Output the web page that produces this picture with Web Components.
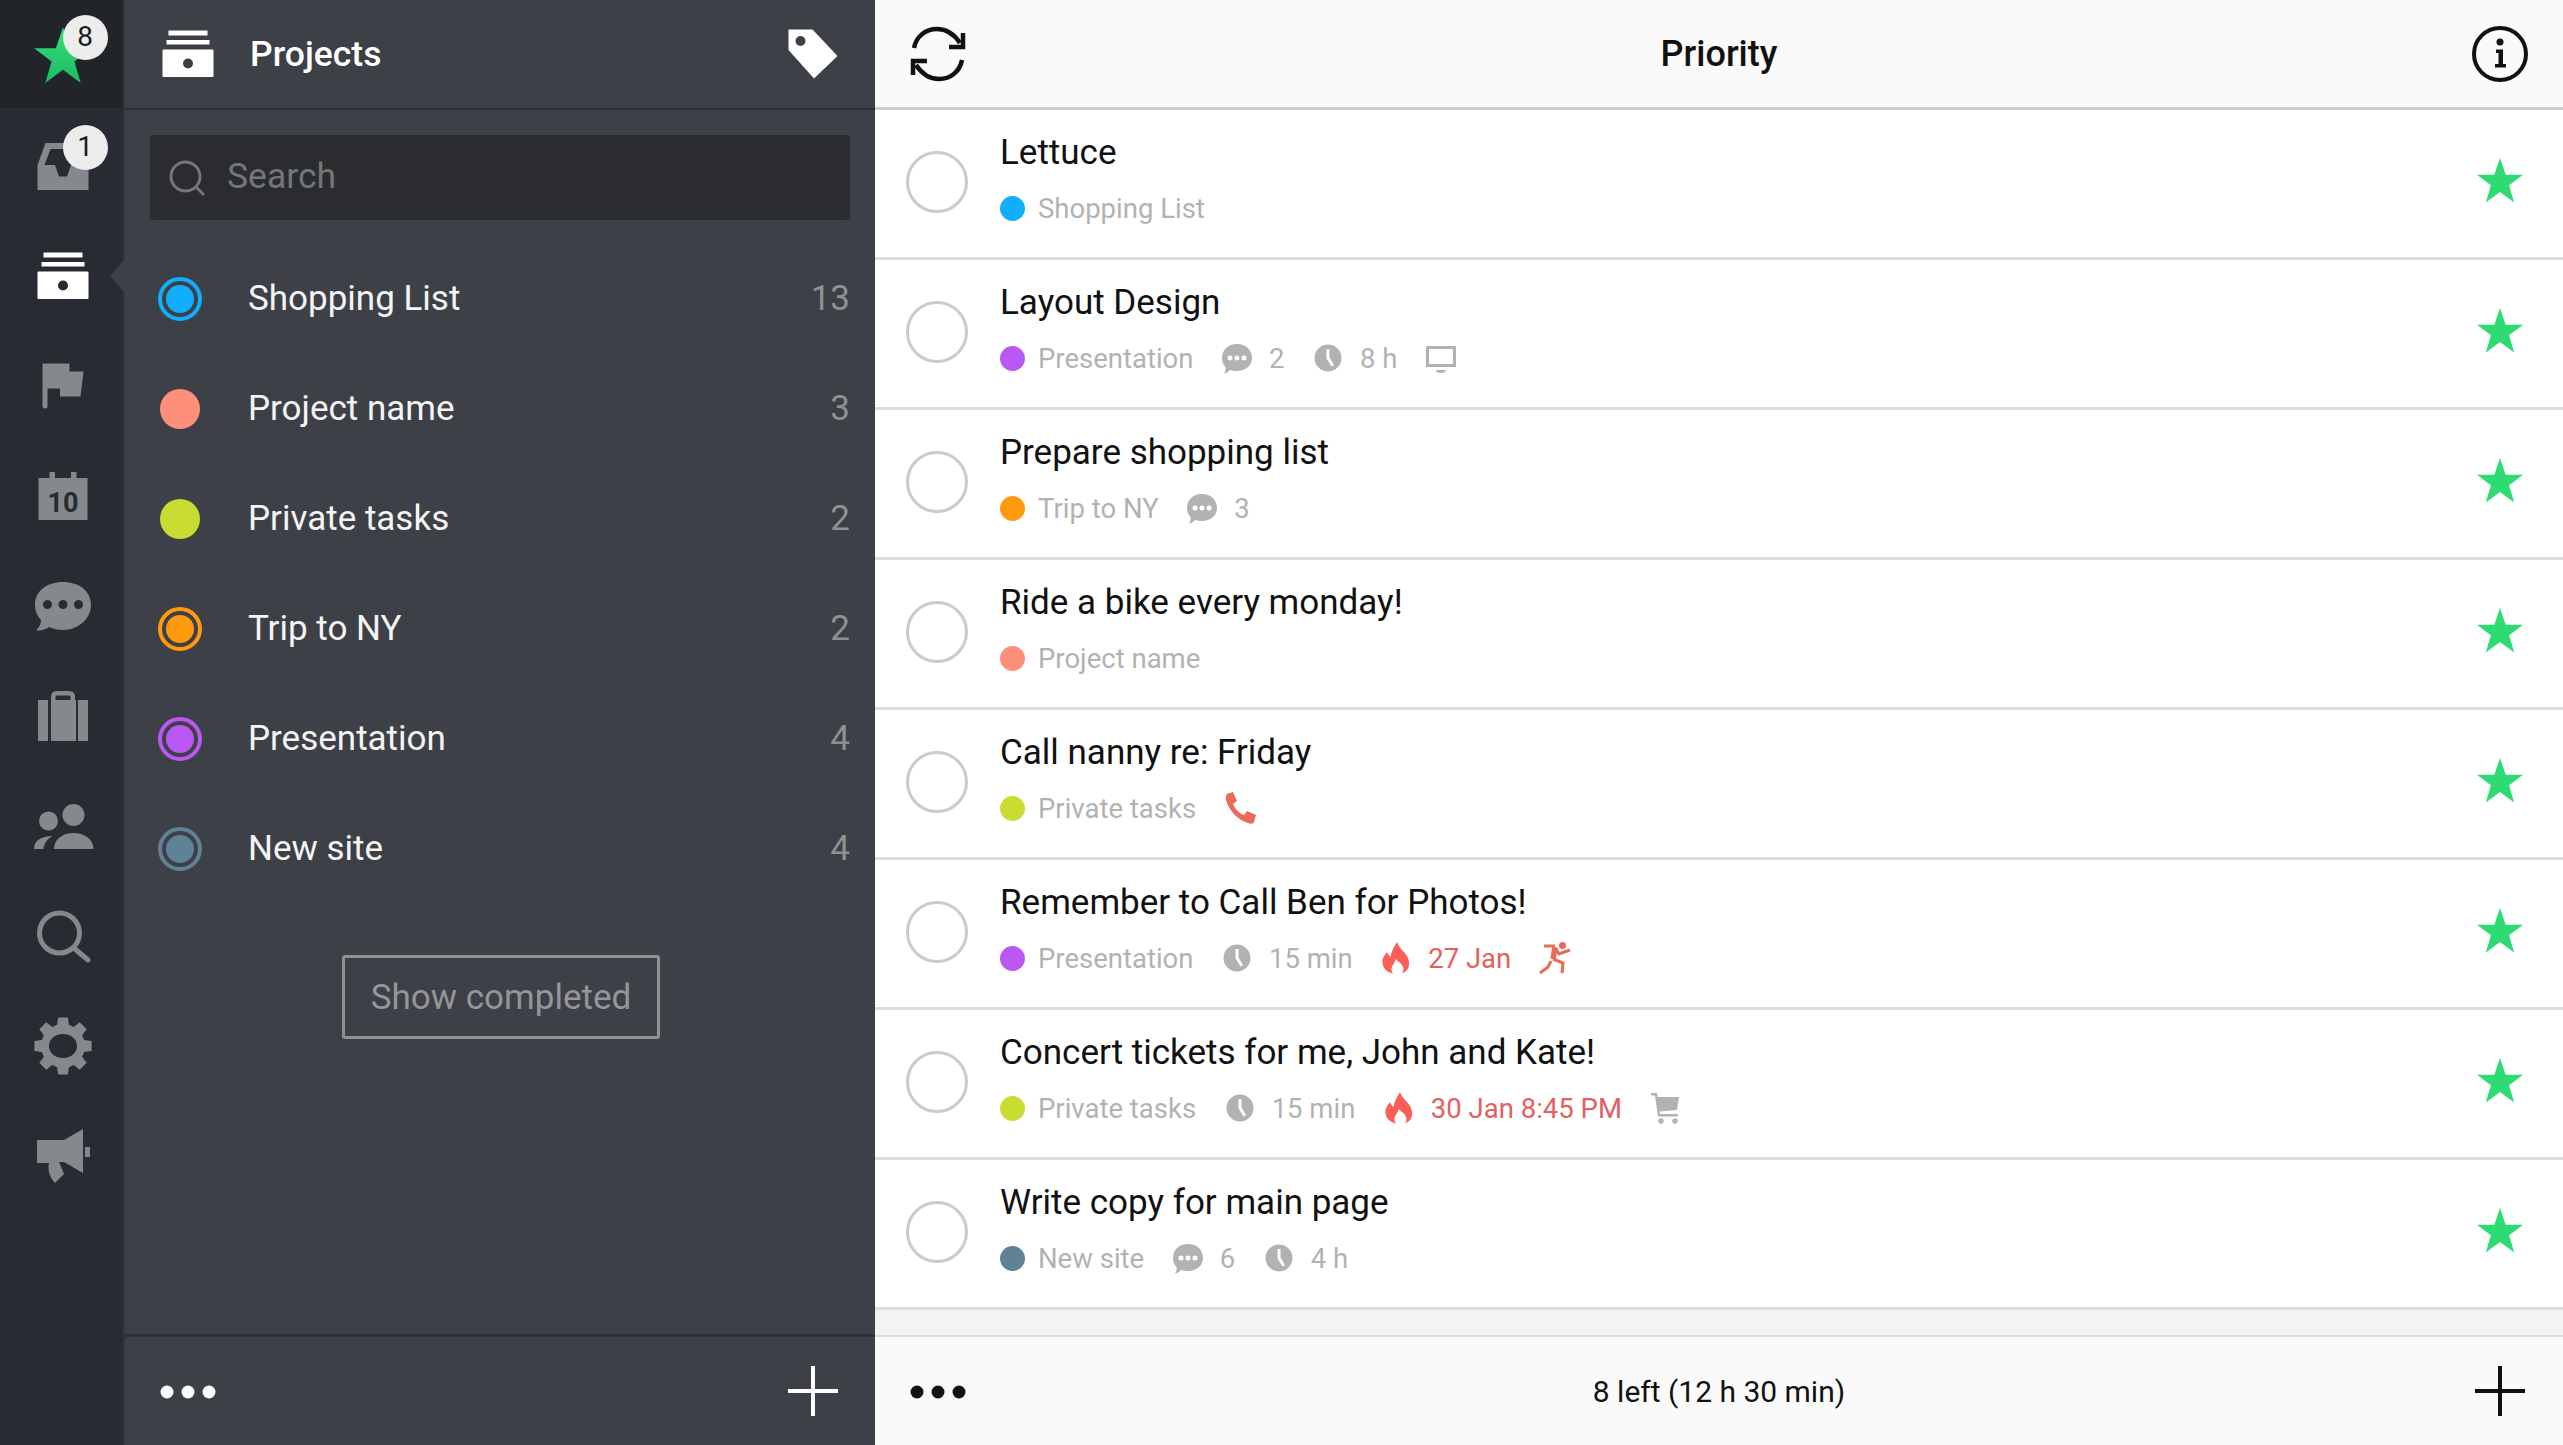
<!DOCTYPE html>
<html>
<head>
<meta charset="utf-8">
<title>Priority</title>
<style>
    html, body { margin: 0; height: 100%; overflow: hidden; font-family: Roboto, "Liberation Sans", sans-serif; }
    app-shell { height: 1445px; }
</style>
</head>
<body>
<app-shell>
    <app-rail slot="rail">
        <rail-item icon="star" badge="8" top></rail-item>
        <rail-item icon="inbox" badge="1"></rail-item>
        <rail-item icon="archive" active></rail-item>
        <rail-item icon="flag"></rail-item>
        <rail-item icon="calendar"></rail-item>
        <rail-item icon="bubble"></rail-item>
        <rail-item icon="briefcase"></rail-item>
        <rail-item icon="people"></rail-item>
        <rail-item icon="search"></rail-item>
        <rail-item icon="gear"></rail-item>
        <rail-item icon="megaphone"></rail-item>
    </app-rail>

    <project-panel slot="projects">
        <project-row color="#10aefb" count="13" ring>Shopping List</project-row>
        <project-row color="#ff8f7a" count="3">Project name</project-row>
        <project-row color="#c8dc32" count="2">Private tasks</project-row>
        <project-row color="#ff9a0e" count="2" ring>Trip to NY</project-row>
        <project-row color="#bb57f2" count="4" ring>Presentation</project-row>
        <project-row color="#5f8296" count="4" ring>New site</project-row>
    </project-panel>

    <task-panel slot="tasks">
        <task-row name="Lettuce" project="Shopping List" color="#10aefb"></task-row>
        <task-row name="Layout Design" project="Presentation" color="#bb57f2">
            <meta-tag icon="chat">2</meta-tag>
            <meta-tag icon="clock">8 h</meta-tag>
            <meta-tag icon="monitor"></meta-tag>
        </task-row>
        <task-row name="Prepare shopping list" project="Trip to NY" color="#ff9a0e">
            <meta-tag icon="chat">3</meta-tag>
        </task-row>
        <task-row name="Ride a bike every monday!" project="Project name" color="#ff8f7a"></task-row>
        <task-row name="Call nanny re: Friday" project="Private tasks" color="#c8dc32">
            <meta-tag icon="phone" tone="red"></meta-tag>
        </task-row>
        <task-row name="Remember to Call Ben for Photos!" project="Presentation" color="#bb57f2">
            <meta-tag icon="clock">15 min</meta-tag>
            <meta-tag icon="flame" tone="red">27 Jan</meta-tag>
            <meta-tag icon="runner" tone="red"></meta-tag>
        </task-row>
        <task-row name="Concert tickets for me, John and Kate!" project="Private tasks" color="#c8dc32">
            <meta-tag icon="clock">15 min</meta-tag>
            <meta-tag icon="flame" tone="red">30 Jan 8:45 PM</meta-tag>
            <meta-tag icon="cart"></meta-tag>
        </task-row>
        <task-row name="Write copy for main page" project="New site" color="#5f8296">
            <meta-tag icon="chat">6</meta-tag>
            <meta-tag icon="clock">4 h</meta-tag>
        </task-row>
    </task-panel>
</app-shell>

<script>
    // gear outline, 8 teeth around the centre of a 60 box
    function gearPath() {
        const pts = [];
        for (let i = 0; i < 8; i++) {
            const a = i * Math.PI / 4 - Math.PI / 2;
            [[-0.27, 22], [-0.17, 29], [0.17, 29], [0.27, 22]].forEach(([da, r]) => {
                pts.push((30 + r * Math.cos(a + da)).toFixed(1) + ' ' + (30 + r * Math.sin(a + da)).toFixed(1));
            });
        }
        return 'M' + pts.join('L') + 'Z';
    }

    const STAR = 'M50 2 61.8 37H98L69 59 79.5 95 50 73 20.5 95 31 59 2 37H38.2Z';

    // all icons live here, <use> can't reach across shadow roots
    const ICONS = {
        star: { box: 100, body: `<defs><linearGradient id="g" x1="0" y1="0" x2="0" y2="1"><stop offset="0" stop-color="#33e07c"/><stop offset="1" stop-color="#1dbb60"/></linearGradient></defs><path fill="url(#g)" d="${STAR}"/>` },
        flatstar: { box: 100, body: `<path fill="#2edb72" d="${STAR}"/>` },
        archive: { box: 60, body: `<path d="M10.5 6.500H49.500V11.500H10.500ZM8.500 16H51.500V20.500H8.500Z"/><path fill-rule="evenodd" d="M5.500 25.500H54.500Q55.500 25.500 55.500 26.500V52Q55.500 53 54.500 53H5.500Q4.500 53 4.500 52V26.500Q4.500 25.500 5.500 25.500ZM30 34.500A5 5 0 1 0 30 44.500 5 5 0 0 0 30 34.500Z"/>` },
        inbox: { box: 60, body: `<path fill-rule="evenodd" d="M12.500 7H47.500L55.500 29V54H4.500V29ZM17.500 13 11.500 29H22L26 40.500H34L38 29H48.500L42.500 13Z"/>` },
        flag: { box: 60, body: `<path d="M9.500 7.500H36.500V15.500H50.500L47.500 40.500H27V32.500H14.500V50Q14.500 52.500 12 52.500 9.500 52.500 9.500 50Z"/>` },
        calendar: { box: 60, body: `<path d="M16.500 6H22V12H38V6H43.500V12H54.500V54H5.500V12H16.500Z"/><text x="30" y="46" text-anchor="middle" font-family="Roboto, sans-serif" font-weight="700" font-size="27" fill="#282b31">10</text>` },
        bubble: { box: 60, body: `<path fill-rule="evenodd" d="M30 6C46 6 58 15 58 29 58 43 45 54 30 54 25 54 20 53 16 51 12 54 7 55 3 54 6 52 8 48 8 44 4 40 2 35 2 29 2 15 14 6 30 6ZM14.500 24A4.500 4.500 0 1 0 14.500 33 4.500 4.500 0 0 0 14.500 24ZM30 24A4.500 4.500 0 1 0 30 33 4.500 4.500 0 0 0 30 24ZM45.500 24A4.500 4.500 0 1 0 45.500 33 4.500 4.500 0 0 0 45.500 24Z"/>` },
        briefcase: { box: 60, body: `<path d="M5 14H15V55H5ZM45 14H55V55H45Z"/><path fill-rule="evenodd" d="M18 14V11Q18 5 24 5H36Q42 5 42 11V14H43V55H18ZM24 9.500Q22.500 9.500 22.500 11V14H37.500V11Q37.500 9.500 36 9.500Z"/>` },
        people: { box: 60, body: `<circle cx="40.500" cy="19" r="11"/><path d="M21 53C21 43 30 37 40.500 37 51 37 60.500 43 60.500 53Z"/><circle cx="15.500" cy="25" r="9.500"/><path d="M1 53C1 45 8 40 19.500 40 14 43 11 48 10.500 53Z"/>` },
        search: { box: 60, body: `<circle cx="26.500" cy="27" r="20" fill="none" stroke="currentColor" stroke-width="5"/><path d="M42 43 55 54" fill="none" stroke="currentColor" stroke-width="5" stroke-linecap="round"/>` },
        gear: { box: 60, body: `<path fill-rule="evenodd" d="${gearPath()}M30 18C21 18 16 24 16 30 16 36 21 42 30 42 39 42 44 36 44 30 44 24 39 18 30 18Z"/>` },
        megaphone: { box: 60, body: `<path d="M4 14H31L50 3V47L31 36H26L31 48 22 57C18 53 14 45 16 37H4ZM52 21H57V31H52Z"/>` },
        tag: { box: 60, body: `<path fill-rule="evenodd" d="M5.500 5.500H29.500L54.500 32 31 54.500 5.500 26ZM17.500 12A5 5 0 1 0 17.500 22 5 5 0 0 0 17.500 12Z"/>` },
        sync: { box: 60, body: `<g fill="none" stroke="currentColor" stroke-width="4.500"><path d="M6 24C8 13 17 5 29 5 39 5 46 10 52 19"/><path d="M54 36C52 47 43 55 31 55 21 55 14 50 8 41"/><path d="M55 9V23H41" stroke-linejoin="miter"/><path d="M5 51V37H19" stroke-linejoin="miter"/></g>` },
        info: { box: 60, body: `<circle cx="30" cy="30" r="26" fill="none" stroke="currentColor" stroke-width="4"/><circle cx="30" cy="18" r="3.500"/><path d="M26 25.500H33V40H36V43.500H25V40H28.500V29H26Z"/>` },
        dots: { box: 60, body: `<circle cx="9" cy="31" r="6.500"/><circle cx="30" cy="31" r="6.500"/><circle cx="51" cy="31" r="6.500"/>` },
        plus: { box: 60, body: `<path d="M28 5H32V28H55V32H32V55H28V32H5V28H28Z"/>` },
        lens: { box: 40, body: `<circle cx="18.500" cy="18.500" r="14.500" fill="none" stroke="currentColor" stroke-width="3"/><path d="M29 29 37 37" stroke="currentColor" stroke-width="3" fill="none"/>` },
        chat: { box: 34, body: `<path fill-rule="evenodd" d="M17 3C26 3 32 9 32 17 32 25 25 30 17 30 14 30 12 29.500 10 29 8 31 6 32.500 4 32.500 5.500 30.500 6 28 5.500 26 3 23.500 2 20.500 2 17 2 9 8 3 17 3ZM10 14.500A2.500 2.500 0 1 0 10 19.500 2.500 2.500 0 0 0 10 14.500ZM17 14.500A2.500 2.500 0 1 0 17 19.500 2.500 2.500 0 0 0 17 14.500ZM24 14.500A2.500 2.500 0 1 0 24 19.500 2.500 2.500 0 0 0 24 14.500Z"/>` },
        clock: { box: 34, body: `<path fill-rule="evenodd" d="M17 3.500A13.500 13.500 0 1 0 17 30.500 13.500 13.500 0 0 0 17 3.500ZM15.500 8H18.500V16.500L23 24 20.500 25.500 15.500 17.500Z"/>` },
        monitor: { box: 34, body: `<path fill-rule="evenodd" d="M2 5H32V26H2ZM5 8V23H29V8Z"/><path d="M12 29H22C22 31 20 32 17 32 14 32 12 31 12 29Z"/>` },
        phone: { box: 34, body: `<path fill="#e96a55" d="M4 3 10 1 14 10 10 13C12 18 16 22 21 24L24 20 33 24 31 31C30 33 28 33 25 32 15 29 6 20 3 9 2.500 6 3 4 4 3Z"/>` },
        flame: { box: 34, body: `<path fill="#fb5f55" d="M18 1C20 7 25 10 28 15 31 20 31 27 27 30 26 31 24 32 23 32.500 25 30 25 27 23 24 21 21 18 20 16.500 18 16 22 13 24 12.500 27 12 29 13 31 14 32.500 9 31.500 4 28 3.500 22 3 17 6 14 8 11 9 13 10 15 11.500 16 12 11 15 6 18 1Z"/>` },
        runner: { box: 34, body: `<circle cx="24.500" cy="4.500" r="3.500" fill="#e96a55"/><g fill="none" stroke="#e96a55"><path stroke-width="5.500" d="M17 6 15 18"/><path stroke-width="3" d="M6 5H17M18 8 21 13 32 9M15 18 25 22 24 32M13 20 10 26 2 32"/></g>` },
        cart: { box: 34, body: `<path d="M3 2H9L9.500 6H31L29 19 11.500 20.500 12 23H30V25.500H10L7 4.500H3Z"/><circle cx="13" cy="30" r="2.700"/><circle cx="27" cy="30" r="2.700"/>` }
    };

    class UiIcon extends HTMLElement {
        constructor() {
            super();
            this.attachShadow({ mode: 'open' });
        }

        connectedCallback() {
            const icon = ICONS[this.getAttribute('name')];
            const size = this.getAttribute('size') || icon.box;
            this.shadowRoot.innerHTML = `
                <style>
                    :host { display: block; width: ${size}px; height: ${size}px; flex: none; }
                    svg { display: block; width: 100%; height: 100%; fill: currentColor; overflow: visible; }
                </style>
                <svg viewBox="0 0 ${icon.box} ${icon.box}">${icon.body}</svg>
            `;
        }
    }
    customElements.define('ui-icon', UiIcon);

    class AppShell extends HTMLElement {
        constructor() {
            super();
            this.attachShadow({ mode: 'open' }).innerHTML = `
                <style>
                    :host { display: grid; grid-template-columns: 125px 750px 1fr; width: 100%; }
                </style>
                <slot name="rail"></slot>
                <slot name="projects"></slot>
                <slot name="tasks"></slot>
            `;
        }
    }
    customElements.define('app-shell', AppShell);

    class AppRail extends HTMLElement {
        constructor() {
            super();
            this.attachShadow({ mode: 'open' }).innerHTML = `
                <style>
                    :host { display: flex; flex-direction: column; background: #282b31; border-right: 2px solid #33363c; box-sizing: border-box; height: 1445px; }
                </style>
                <slot></slot>
            `;
        }
    }
    customElements.define('app-rail', AppRail);

    class RailItem extends HTMLElement {
        constructor() {
            super();
            this.attachShadow({ mode: 'open' });
        }

        connectedCallback() {
            const name = this.getAttribute('icon');
            const badge = this.getAttribute('badge');
            this.shadowRoot.innerHTML = `
                <style>
                    :host { display: flex; align-items: center; justify-content: center; height: 110px; position: relative; color: #85888d; padding: 2px 0 0 2px; box-sizing: border-box; }
                    :host([top]) { background: #212429; height: 108px; margin-bottom: 2px; padding-top: 4px; }
                    :host([active]) { color: #fff; }
                    :host([active])::after {
                        content: ''; position: absolute; right: -2px; top: 50%; margin-top: -16px;
                        border: solid transparent; border-width: 17px 15px 17px 0; border-right-color: #3d4046;
                    }
                    .wrap { position: relative; width: 60px; height: 60px; }
                    .badge {
                        position: absolute; left: 30px; top: -11px; width: 45px; height: 45px; border-radius: 50%;
                        background: #ececec; color: #1b1b1b; font-size: 28px; line-height: 43px; text-align: center;
                    }
                </style>
                <div class="wrap">
                    <ui-icon name="${name}" size="60"></ui-icon>
                    ${badge ? `<div class="badge">${badge}</div>` : ''}
                </div>
            `;
        }
    }
    customElements.define('rail-item', RailItem);

    class ProjectPanel extends HTMLElement {
        constructor() {
            super();
            this.attachShadow({ mode: 'open' }).innerHTML = `
                <style>
                    :host { display: flex; flex-direction: column; height: 1445px; background: #3d4046; color: #fff; }
                    header, footer { display: flex; align-items: center; justify-content: space-between; flex: none; padding: 0 32px 0 33px; }
                    header { height: 108px; border-bottom: 2px solid #2b2d32; }
                    footer { height: 108px; border-top: 3px solid #2f3136; }
                    .head-left { display: flex; align-items: center; gap: 32px; }
                    h1 { margin: 0; font-size: 35.500px; font-weight: 500; }
                    .search {
                        display: flex; align-items: center; gap: 20px; flex: none; height: 85px;
                        margin: 25px 25px 0; padding: 0 0 3px 17px; box-sizing: border-box; background: #2a2c30; border-radius: 3px;
                        color: #74767a; font-size: 35.500px;
                    }
                    .search ui-icon { color: #74767a; margin-top: 3px; }
                    .list { display: flex; flex-direction: column; flex: none; margin-top: 24px; }
                    .more { flex: 1; display: flex; justify-content: center; align-items: flex-start; padding: 51px 0 0 2px; }
                    .btn {
                        box-sizing: border-box; width: 318px; height: 84px; border: 3px solid #8e9093; border-radius: 3px;
                        display: flex; align-items: center; justify-content: center; color: #94969a; font-size: 35px;
                    }
                </style>
                <header>
                    <div class="head-left">
                        <ui-icon name="archive"></ui-icon>
                        <h1>Projects</h1>
                    </div>
                    <ui-icon name="tag"></ui-icon>
                </header>
                <div class="search"><ui-icon name="lens" size="40"></ui-icon><span>Search</span></div>
                <div class="list"><slot></slot></div>
                <div class="more"><div class="btn">Show completed</div></div>
                <footer>
                    <ui-icon name="dots"></ui-icon>
                    <ui-icon name="plus"></ui-icon>
                </footer>
            `;
        }
    }
    customElements.define('project-panel', ProjectPanel);

    class ProjectRow extends HTMLElement {
        constructor() {
            super();
            this.attachShadow({ mode: 'open' });
        }

        connectedCallback() {
            const color = this.getAttribute('color');
            const count = this.getAttribute('count');
            this.shadowRoot.innerHTML = `
                <style>
                    :host { display: flex; align-items: center; height: 110px; padding: 0 25px 0 33px; font-size: 35px; }
                    .mark { width: 44px; height: 44px; flex: none; margin-right: 46px; display: flex; align-items: center; justify-content: center; box-sizing: border-box; border-radius: 50%; }
                    .mark i { display: block; border-radius: 50%; background: ${color}; width: 40px; height: 40px; }
                    :host([ring]) .mark { border: 4px solid ${color}; }
                    :host([ring]) .mark i { width: 28px; height: 28px; }
                    .name { flex: 1; color: #f4f4f4; margin-bottom: 2px; }
                    .count { color: #8f9195; margin-bottom: 2px; }
                </style>
                <div class="mark"><i></i></div>
                <div class="name"><slot></slot></div>
                <div class="count">${count}</div>
            `;
        }
    }
    customElements.define('project-row', ProjectRow);

    class TaskPanel extends HTMLElement {
        constructor() {
            super();
            this.attachShadow({ mode: 'open' }).innerHTML = `
                <style>
                    :host { display: flex; flex-direction: column; height: 1445px; background: #f3f3f3; color: #111; }
                    header, footer { display: grid; grid-template-columns: 60px 1fr 60px; align-items: center; flex: none; padding: 0 33px; background: #fafafa; text-align: center; }
                    header { height: 107px; border-bottom: 3px solid #cfcfcf; }
                    footer { height: 108px; border-top: 2px solid #dcdcdc; font-size: 30px; }
                    h1 { margin: 0; font-size: 36px; font-weight: 500; }
                    .list { flex: 1; }
                </style>
                <header>
                    <ui-icon name="sync"></ui-icon>
                    <h1>Priority</h1>
                    <ui-icon name="info"></ui-icon>
                </header>
                <div class="list"><slot></slot></div>
                <footer>
                    <ui-icon name="dots"></ui-icon>
                    <div>8 left (12 h 30 min)</div>
                    <ui-icon name="plus"></ui-icon>
                </footer>
            `;
        }
    }
    customElements.define('task-panel', TaskPanel);

    class TaskRow extends HTMLElement {
        constructor() {
            super();
            this.attachShadow({ mode: 'open' });
        }

        connectedCallback() {
            this.shadowRoot.innerHTML = `
                <style>
                    :host { display: flex; align-items: center; box-sizing: border-box; height: 150px; background: #fff; border-bottom: 3px solid #dedede; padding: 0 33px 0 31px; }
                    .check { box-sizing: border-box; width: 62px; height: 62px; border: 3px solid #cbcbcb; border-radius: 50%; flex: none; margin: 0 32px 3px 0; }
                    .body { flex: 1; display: flex; flex-direction: column; gap: 16.500px; min-width: 0; padding-bottom: 9.500px; }
                    .name { font-size: 35px; line-height: 42px; color: #111; }
                    .meta { display: flex; align-items: center; gap: 26.500px; height: 36px; font-size: 27.500px; color: #b2b2b2; }
                    .project { display: flex; align-items: center; gap: 13px; }
                    .dot { width: 25px; height: 25px; border-radius: 50%; background: ${this.getAttribute('color')}; }
                    .fav { width: 60px; display: flex; justify-content: center; margin-bottom: 6px; }
                </style>
                <div class="check"></div>
                <div class="body">
                    <div class="name">${this.getAttribute('name')}</div>
                    <div class="meta">
                        <div class="project"><span class="dot"></span><span>${this.getAttribute('project')}</span></div>
                        <slot></slot>
                    </div>
                </div>
                <div class="fav"><ui-icon name="flatstar" size="48"></ui-icon></div>
            `;
        }
    }
    customElements.define('task-row', TaskRow);

    class MetaTag extends HTMLElement {
        constructor() {
            super();
            this.attachShadow({ mode: 'open' });
        }

        connectedCallback() {
            this.shadowRoot.innerHTML = `
                <style>
                    :host { display: flex; align-items: center; gap: 15px; color: #b2b2b2; }
                    :host([tone="red"]) { color: #e2605f; }
                </style>
                <ui-icon name="${this.getAttribute('icon')}"></ui-icon>
                <slot></slot>
            `;
        }
    }
    customElements.define('meta-tag', MetaTag);
</script>
</body>
</html>
